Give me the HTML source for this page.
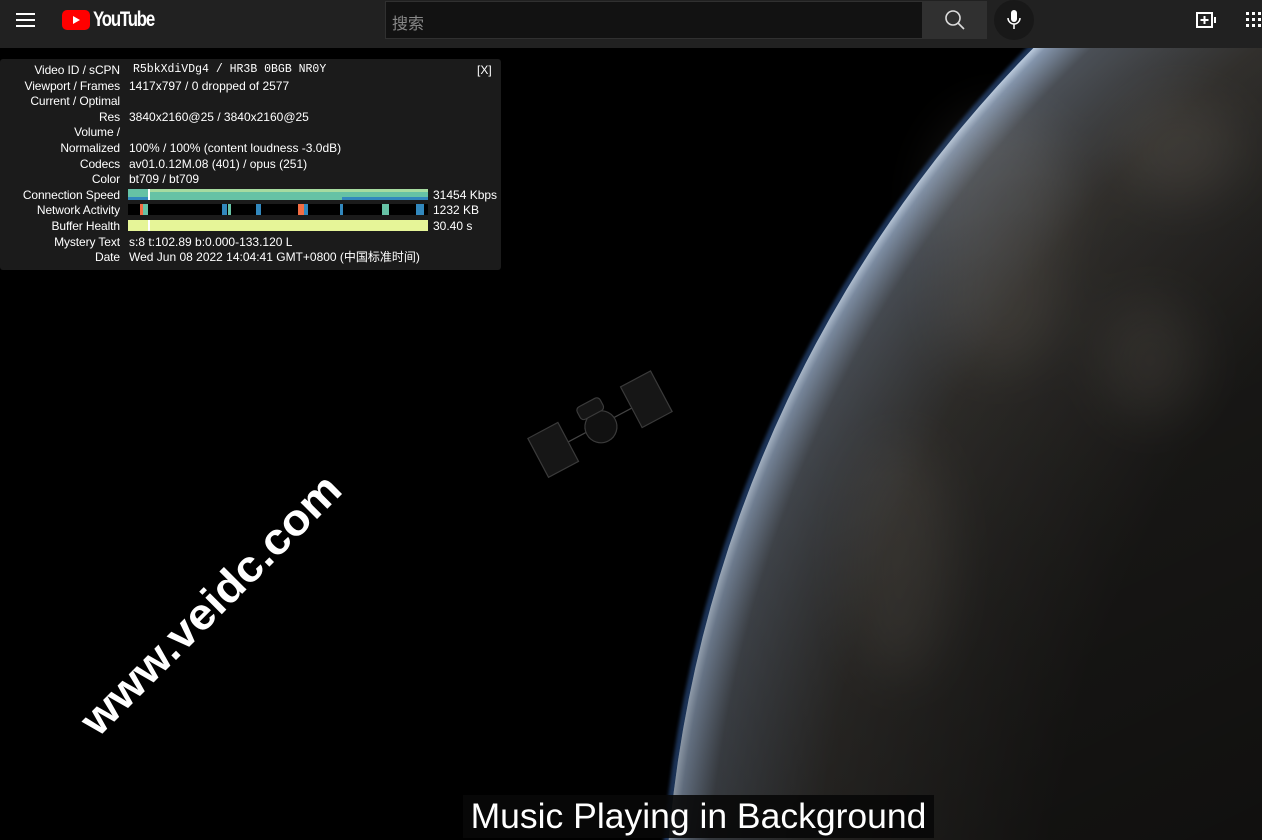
<!DOCTYPE html>
<html><head><meta charset="utf-8">
<style>
*{margin:0;padding:0;box-sizing:border-box}
html,body{width:1262px;height:840px;overflow:hidden}
body{background:#000;font-family:"Liberation Sans","Noto Sans CJK SC",sans-serif;position:relative}
#hdr{position:absolute;left:0;top:0;width:1262px;height:48px;background:#212121}
#search{position:absolute;left:385px;top:1px;width:538px;height:38px;background:#121212;border:1px solid #303030;color:#888;font-size:16px;padding:8px 6px}
#sbtn{position:absolute;left:923px;top:1px;width:64px;height:38px;background:#303030;border:1px solid #303030}
#mic{position:absolute;left:994px;top:0;width:40px;height:40px;border-radius:50%;background:#181818}
#stats{position:absolute;left:0;top:59px;width:501px;height:211px;background:rgba(28,28,28,.95);border-radius:3px;color:#fff;font-size:12px}
.r{position:absolute;left:0;height:16px;line-height:16px;white-space:nowrap}
.l{position:absolute;right:381px;text-align:right;width:130px;letter-spacing:-0.1px}
.v{position:absolute;left:129px}
#cap{position:absolute;left:463px;top:795px;width:471px;height:43px;background:rgba(8,8,8,.9);color:#fff;font-size:35.5px;line-height:43px;text-align:center;white-space:nowrap;overflow:hidden}
</style></head><body>
<svg width="1262" height="840" style="position:absolute;left:0;top:0">
<defs>
<radialGradient id="eg" cx="1950" cy="950" r="1290" gradientUnits="userSpaceOnUse">
<stop offset="0.7" stop-color="#1e1d1b"/><stop offset="0.88" stop-color="#34322f"/><stop offset="0.965" stop-color="#4c5158"/><stop offset="0.99" stop-color="#8596ad"/><stop offset="1" stop-color="#d6e5f6"/>
</radialGradient>
<linearGradient id="dk" x1="900" y1="100" x2="1262" y2="840" gradientUnits="userSpaceOnUse">
<stop offset="0" stop-color="#000" stop-opacity="0"/><stop offset="1" stop-color="#000" stop-opacity=".45"/>
</linearGradient>
<filter id="bl"><feGaussianBlur stdDeviation="1.5"/></filter>
<filter id="bl2"><feGaussianBlur stdDeviation="25"/></filter>
</defs>
<circle cx="1950" cy="950" r="1291" fill="#2f5590" filter="url(#bl)" opacity=".6"/>
<circle cx="1950" cy="950" r="1286" fill="url(#eg)"/>
<g fill="#b8ad9e" opacity=".12" filter="url(#bl2)">
<ellipse cx="1000" cy="200" rx="70" ry="90"/><ellipse cx="1180" cy="150" rx="60" ry="50"/><ellipse cx="900" cy="560" rx="50" ry="120"/><ellipse cx="1000" cy="300" rx="60" ry="70"/><ellipse cx="1150" cy="360" rx="50" ry="60"/>
</g>
<circle cx="1950" cy="950" r="1286" fill="url(#dk)"/>
<g transform="translate(600,425) rotate(-28)" fill="#161616" stroke="#3a3a3a" stroke-width="1.2">
<line x1="-60" y1="0" x2="60" y2="0" stroke="#444"/>
<rect x="-70" y="-22" width="34" height="44"/><rect x="36" y="-24" width="34" height="46"/>
<circle cx="0" cy="2" r="16" fill="#111"/>
<rect x="-14" y="-26" width="26" height="14" rx="4" fill="#151515"/>
</g>
<text transform="translate(98,738) rotate(-45)" fill="#fff" font-family="Liberation Sans,sans-serif" font-weight="bold" font-size="44" textLength="348" lengthAdjust="spacingAndGlyphs">www.veidc.com</text>
</svg>
<div id="hdr">
<div style="position:absolute;left:16px;top:13px;width:19px;height:14px;border-top:2px solid #fff;border-bottom:2px solid #fff"><div style="margin-top:4px;height:2px;background:#fff"></div></div>
<div style="position:absolute;left:62px;top:10px;width:28px;height:20px;background:#f00;border-radius:5px"><div style="position:absolute;left:11px;top:6px;border-left:7px solid #fff;border-top:4px solid transparent;border-bottom:4px solid transparent"></div></div>
<div style="position:absolute;left:93px;top:8px;color:#fff;font-size:21px;font-weight:bold;letter-spacing:-1.5px;transform:scaleX(.8);transform-origin:left">YouTube</div>
<div id="search">搜索</div>
<div id="sbtn"><svg width="64" height="38"><circle cx="29" cy="16" r="7" fill="none" stroke="#ddd" stroke-width="1.6"/><line x1="34" y1="21" x2="40" y2="27" stroke="#ddd" stroke-width="1.6"/></svg></div>
<div id="mic"><svg width="40" height="40"><rect x="17" y="10" width="6" height="12" rx="3" fill="#fff"/><path d="M14 18a6 6 0 0 0 12 0M20 24v5" stroke="#fff" stroke-width="1.5" fill="none"/></svg></div>
<svg style="position:absolute;left:1196px;top:10px" width="22" height="20"><rect x="1" y="3" width="15" height="14" fill="none" stroke="#fff" stroke-width="2"/><path d="M8.5 6v8M4.5 10h8M19 7v6" stroke="#fff" stroke-width="2"/></svg>
<svg style="position:absolute;left:1246px;top:12px" width="16" height="16" fill="#fff"><rect x="0" y="0" width="3" height="3"/><rect x="6" y="0" width="3" height="3"/><rect x="12" y="0" width="3" height="3"/><rect x="0" y="6" width="3" height="3"/><rect x="6" y="6" width="3" height="3"/><rect x="12" y="6" width="3" height="3"/><rect x="0" y="12" width="3" height="3"/><rect x="6" y="12" width="3" height="3"/><rect x="12" y="12" width="3" height="3"/></svg>
</div>
<div id="stats">
<div class="r" style="top:3px;width:501px"><span class="l">Video ID / sCPN</span><span class="v" style="left:133px;font-family:'Liberation Mono',monospace;font-size:11.5px">R5bkXdiVDg4 / HR3B 0BGB NR0Y</span><span style="position:absolute;left:477px">[X]</span></div>
<div class="r" style="top:18.6px;width:501px"><span class="l">Viewport / Frames</span><span class="v">1417x797 / 0 dropped of 2577</span></div>
<div class="r" style="top:34.2px;width:501px"><span class="l">Current / Optimal</span></div>
<div class="r" style="top:49.8px;width:501px"><span class="l">Res</span><span class="v">3840x2160@25 / 3840x2160@25</span></div>
<div class="r" style="top:65.4px;width:501px"><span class="l">Volume /</span></div>
<div class="r" style="top:81px;width:501px"><span class="l">Normalized</span><span class="v">100% / 100% (content loudness -3.0dB)</span></div>
<div class="r" style="top:96.6px;width:501px"><span class="l">Codecs</span><span class="v">av01.0.12M.08 (401) / opus (251)</span></div>
<div class="r" style="top:112.2px;width:501px"><span class="l">Color</span><span class="v">bt709 / bt709</span></div>
<div class="r" style="top:127.8px;width:501px"><span class="l">Connection Speed</span><span class="v" style="left:433px">31454 Kbps</span></div>
<div class="r" style="top:143.4px;width:501px"><span class="l">Network Activity</span><span class="v" style="left:433px">1232 KB</span></div>
<div class="r" style="top:159px;width:501px"><span class="l">Buffer Health</span><span class="v" style="left:433px">30.40 s</span></div>
<div class="r" style="top:174.6px;width:501px"><span class="l">Mystery Text</span><span class="v">s:8 t:102.89 b:0.000-133.120 L</span></div>
<div class="r" style="top:190.2px;width:501px"><span class="l">Date</span><span class="v">Wed Jun 08 2022 14:04:41 GMT+0800 (中国标准时间)</span></div>
<svg style="position:absolute;left:128px;top:130px" width="300" height="45">
<rect x="0" y="0" width="300" height="11" fill="#66c2a5"/><rect x="22" y="0" width="278" height="3" fill="#a6dba0"/><rect x="0" y="8" width="20" height="3" fill="#3288bd"/><rect x="214" y="8" width="86" height="3" fill="#3288bd"/><rect x="20" y="0" width="2" height="11" fill="#fff"/>
<rect x="0" y="15" width="300" height="11" fill="#000"/>
<rect x="12" y="15" width="3" height="11" fill="#f46d43"/><rect x="15" y="15" width="5" height="11" fill="#66c2a5"/><rect x="94" y="15" width="5" height="11" fill="#3288bd"/><rect x="100" y="15" width="3" height="11" fill="#66c2a5"/><rect x="128" y="15" width="5" height="11" fill="#3288bd"/><rect x="170" y="15" width="6" height="11" fill="#f46d43"/><rect x="176" y="15" width="4" height="11" fill="#3288bd"/><rect x="212" y="15" width="3" height="11" fill="#3288bd"/><rect x="254" y="15" width="7" height="11" fill="#66c2a5"/><rect x="288" y="15" width="8" height="11" fill="#3288bd"/>
<rect x="0" y="31" width="300" height="11" fill="#e6f598"/><rect x="20" y="31" width="2" height="11" fill="#fff"/>
</svg>
</div>
<div id="cap">Music Playing in Background</div>
</body></html>
